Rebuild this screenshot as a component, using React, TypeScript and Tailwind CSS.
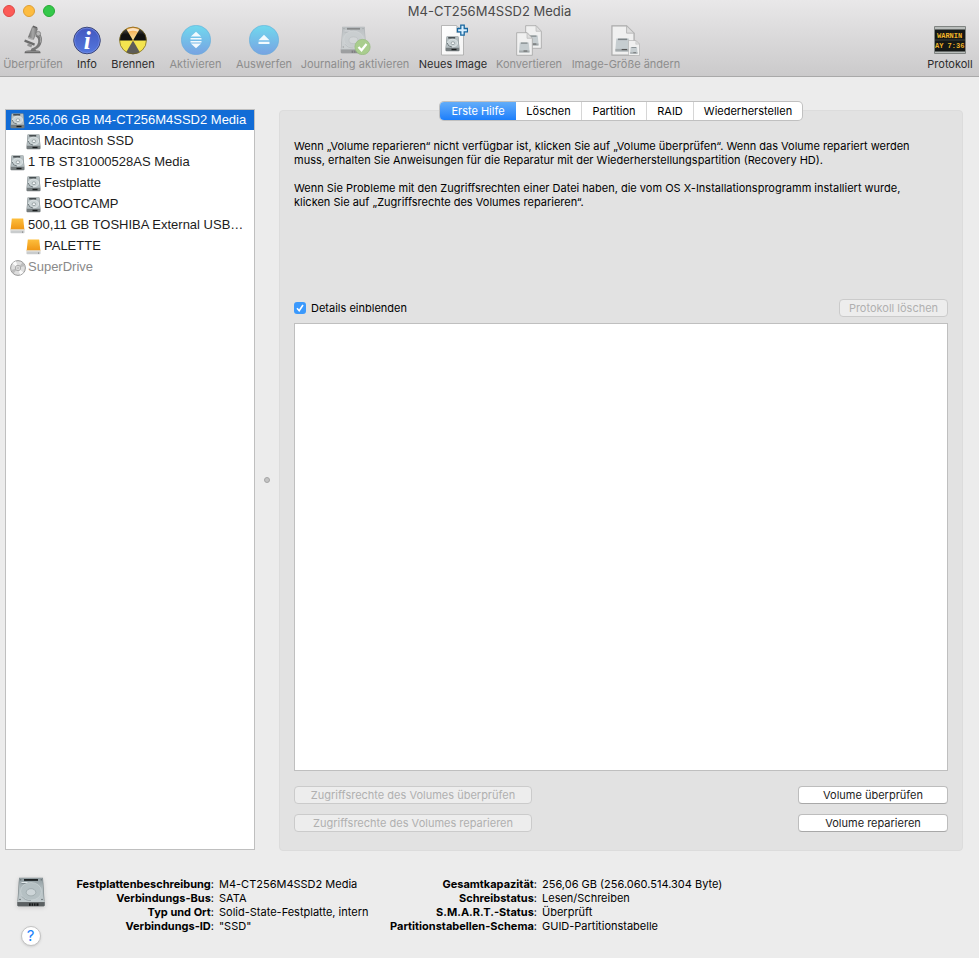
import { useState } from 'react';
import type { ReactNode } from 'react';
import clsx from 'clsx';

function SharedDefs() {
  return (
    <svg className="absolute w-0 h-0" aria-hidden="true">
      <defs>
        <linearGradient id="metal" x1="0" y1="0" x2="0" y2="1">
          <stop offset="0" stopColor="#8f9b9f" />
          <stop offset="0.5" stopColor="#b4bfc2" />
          <stop offset="1" stopColor="#c3cccf" />
        </linearGradient>
        <linearGradient id="orange" x1="0" y1="0" x2="0" y2="1">
          <stop offset="0" stopColor="#fdbf3d" />
          <stop offset="1" stopColor="#ef9413" />
        </linearGradient>
        <linearGradient id="sky" x1="0" y1="0" x2="0" y2="1">
          <stop offset="0" stopColor="#70d9ee" />
          <stop offset="1" stopColor="#78a2e2" />
        </linearGradient>
        <linearGradient id="info" x1="0" y1="0" x2="0" y2="1">
          <stop offset="0" stopColor="#4257bf" />
          <stop offset="1" stopColor="#5478de" />
        </linearGradient>
        <linearGradient id="steel" x1="0" y1="0" x2="1" y2="0">
          <stop offset="0" stopColor="#6d6d6d" />
          <stop offset="0.5" stopColor="#a8a8a8" />
          <stop offset="1" stopColor="#707070" />
        </linearGradient>
        <linearGradient id="burnTop" x1="0" y1="0" x2="0" y2="1">
          <stop offset="0" stopColor="#f3a13c" />
          <stop offset="1" stopColor="#fbe3a4" />
        </linearGradient>
        <linearGradient id="burnSide" x1="0" y1="0" x2="0" y2="1">
          <stop offset="0" stopColor="#4a4a4a" />
          <stop offset="0.5" stopColor="#111" />
        </linearGradient>
        <linearGradient id="page" x1="0" y1="0" x2="1" y2="1">
          <stop offset="0" stopColor="#ffffff" />
          <stop offset="1" stopColor="#f4f4f4" />
        </linearGradient>
      </defs>
    </svg>
  );
}

// drawn in a 30x30 box so it can be nested in the other icons
function DriveShape() {
  return (
    <>
      <path d="M3 .8h24l1.600 24.200v3.200a1 1 0 0 1-1 1H2.400a1 1 0 0 1-1-1V25z" fill="#7b8588" />
      <path d="M3.500 1h23l1.400 23.500H2.100z" fill="url(#metal)" />
      <path d="M1.400 25h27.200v3.200a1 1 0 0 1-1 1H2.400a1 1 0 0 1-1-1z" fill="#5b6062" />
      <path d="M1.500 24.600h27" stroke="#dfe5e7" strokeWidth=".6" />
      <path d="M13 26.300h9.500v2.500H13z" fill="#141617" />
      <path d="M15.200 26.300v2.500M17.600 26.300v2.500M20 26.300v2.500" stroke="#858a8c" strokeWidth=".6" />
      <path d="M8 2h14v1.900H8z" fill="#1f2426" />
      <path d="M5.500 5.500h6" stroke="#e8eef0" strokeWidth="1" />
      <path d="M5.500 6.400h6" stroke="#69757a" strokeWidth=".6" />
      <ellipse cx="15" cy="14.300" rx="10.500" ry="8.800" fill="#b5c0c3" stroke="#cfd7d9" strokeWidth=".6" />
      <ellipse cx="15" cy="15.300" rx="4.800" ry="3.600" fill="#cdd5d8" stroke="#8f9a9d" strokeWidth=".6" />
      <path d="M6 19.500q3 4.200 9 4" stroke="#8b979b" strokeWidth=".7" fill="none" />
      <circle cx="4.800" cy="2.800" r=".6" fill="#4b5153" />
      <circle cx="25.200" cy="2.800" r=".6" fill="#4b5153" />
      <circle cx="4" cy="22.500" r=".7" fill="#4b5153" />
      <circle cx="26" cy="22.500" r=".7" fill="#4b5153" />
    </>
  );
}

function Drive({ className }: { className: string }) {
  return (
    <svg viewBox="0 0 30 30" className={className} aria-hidden="true">
      <DriveShape />
    </svg>
  );
}

function SmallDrive() {
  return (
    <svg viewBox="0 0 15 16" className="w-[15px] h-4 shrink-0" aria-hidden="true">
      <path d="M1.600.5h11.800l1 11v3a.8.8 0 0 1-.8.8H1.400a.8.8 0 0 1-.8-.8v-3z" fill="#737a7c" />
      <path d="M1.800.8h11.400l.8 11H1z" fill="#b5bfc2" />
      <path d="M3.200 1.200h7v1.300h-7z" fill="#2f3436" />
      <ellipse cx="7.600" cy="7" rx="5" ry="3.800" fill="#cad3d5" stroke="#e6ebec" strokeWidth=".7" />
      <ellipse cx="7.900" cy="7.200" rx="1.800" ry="1.400" fill="#f7f9fa" stroke="#7e898c" strokeWidth=".7" />
      <path d="M2.200 7q.6 3.600 4.800 4" stroke="#667074" strokeWidth=".9" fill="none" />
      <path d="M.8 12.200h13.400v2.400H.8z" fill="#757c7e" />
      <path d="M6.500 12.800h5v1.400h-5z" fill="#191c1d" />
    </svg>
  );
}

function ExternalDrive() {
  return (
    <svg viewBox="0 0 15 16" className="w-[15px] h-4 shrink-0" aria-hidden="true">
      <path d="M1.800.5h11.400l1.200 11.500H.6z" fill="url(#orange)" />
      <path d="M.5 11.500h14v3a.8.8 0 0 1-.8.8H1.300a.8.8 0 0 1-.8-.8z" fill="#c9cccd" />
      <path d="M.5 11.500h14v.9H.5z" fill="#f1eee5" />
      <circle cx="12.500" cy="13.900" r=".5" fill="#5c5c5c" />
    </svg>
  );
}

function Disc() {
  return (
    <svg viewBox="0 0 16 16" className="w-4 h-4 shrink-0" aria-hidden="true">
      <circle cx="8" cy="8" r="7.400" fill="#dedede" stroke="#8d8d8d" strokeWidth=".9" />
      <path d="M8 8 2.500 3.500A7 7 0 0 1 6 1.300zM8 8l5.500 4.500a7 7 0 0 1-3.500 2.200z" fill="#fafafa" />
      <path d="M8 8 1.300 10a7 7 0 0 0 2.200 3.400zM8 8l6.700-2a7 7 0 0 0-2.200-3.400z" fill="#bdbdbd" />
      <circle cx="8" cy="8" r="2.700" fill="#eee" stroke="#999" strokeWidth=".8" />
      <circle cx="8" cy="8" r="1.100" fill="#fff" stroke="#8a8a8a" strokeWidth=".6" />
    </svg>
  );
}

function Microscope() {
  return (
    <svg viewBox="0 0 20 30" className="w-5 h-[30px]" aria-hidden="true">
      <path d="M14 7.500c4 1.200 5.800 5 4.600 9.700-.8 3.600-3 6-6.100 7.300l1 2H7.200l1.300-3c3.800-1 6-3 6.600-6.200.4-2.600 0-4.600-2.700-6z" fill="#777" />
      <path d="M15 9c2.600 1.800 3.300 5 2.300 8.600" stroke="#a8a8a8" strokeWidth="1" fill="none" />
      <path d="m9.500 1.800 5 1.900-3.900 10.600-5.300-2z" fill="url(#steel)" stroke="#6e6e6e" strokeWidth=".6" />
      <path d="m10.200.6 4.200 1.600-.5 1.300-4.200-1.600z" fill="#606060" />
      <path d="m5.800 11.900 4.300 1.600-.6 1.500-4.300-1.600z" fill="#aaa" />
      <circle cx="15.300" cy="8.700" r="2.300" fill="#b8b8b8" stroke="#777" strokeWidth=".7" />
      <path d="m2 14.600 10 4-.8 2.200-10-4z" fill="#6b6b6b" />
      <path d="m4.800 18.300 4.500 1.800-1.100 2.300-4-1.600z" fill="#929292" />
      <path d="M1.800 26.800q1-1.300 4-1.300h8q3 0 3.500 1.300l.3 1.400H1.500z" fill="#686868" />
      <path d="M3 26.600h13.500" stroke="#a4a4a4" strokeWidth=".6" />
    </svg>
  );
}

function InfoIcon() {
  return (
    <svg viewBox="0 0 30 30" className="w-[30px] h-[30px]" aria-hidden="true">
      <circle cx="15" cy="15.500" r="13.300" fill="url(#info)" stroke="#3a4475" strokeWidth="1" />
      <circle cx="15" cy="15.500" r="12.400" fill="none" stroke="#7f95e8" strokeWidth=".6" />
      <text x="15.200" y="24" textAnchor="middle" fontFamily="Liberation Serif, serif" fontWeight="700" fontStyle="italic" fontSize="25" fill="#fff">i</text>
    </svg>
  );
}

function BurnIcon() {
  return (
    <svg viewBox="0 0 30 30" className="w-[30px] h-[30px]" aria-hidden="true">
      <circle cx="15" cy="15.500" r="13.500" fill="#f4e44f" />
      <path d="M15 15.500 8.200 3.800a13.500 13.500 0 0 1 13.600 0z" fill="url(#burnTop)" />
      <path d="M15 15.500 8.200 3.800a13.500 13.500 0 0 0-6.700 11.700z" fill="url(#burnSide)" />
      <path d="M15 15.500 21.800 3.800a13.500 13.500 0 0 1 6.700 11.700z" fill="url(#burnSide)" />
      <path d="m15 15.500-6.800 11.700a13.500 13.500 0 0 0 13.600 0z" fill="#5d5c58" />
      <path d="M9 4.800q6-3.600 12 0l-1.200 2q-4.800-2-9.600 0z" fill="#fff" opacity=".65" />
      <circle cx="15" cy="15.500" r="13.400" fill="none" stroke="#6f5c1c" strokeWidth=".7" />
      <circle cx="15" cy="15.500" r="1" fill="#c5a93c" />
    </svg>
  );
}

function MountIcon() {
  return (
    <svg viewBox="0 0 30 30" className="w-[30px] h-[30px]" aria-hidden="true">
      <circle cx="15" cy="15" r="14.700" fill="url(#sky)" stroke="#69aed8" strokeWidth=".6" />
      <path d="m15 6.800 5.200 4.700H9.800zM15 23.200l5.200-4.700H9.800zM9.500 13h11v1.500h-11zM9.500 16h11v1.500h-11z" fill="#f2fafe" />
    </svg>
  );
}

function EjectIcon() {
  return (
    <svg viewBox="0 0 30 30" className="w-[30px] h-[30px]" aria-hidden="true">
      <circle cx="15" cy="15" r="14.700" fill="url(#sky)" stroke="#69aed8" strokeWidth=".6" />
      <path d="m15 9.800 5.500 5.500h-11zM9.500 16.800h11V19h-11z" fill="#f2fafe" />
    </svg>
  );
}

function JournalIcon() {
  return (
    <svg viewBox="0 0 32 30" className="w-8 h-[30px]" aria-hidden="true">
      <g opacity=".45">
        <svg x="0" y="1" width="29" height="28" viewBox="0 0 30 30"><DriveShape /></svg>
      </g>
      <circle cx="23.500" cy="22" r="7.700" fill="#a9cd8e" stroke="#94b77d" strokeWidth=".6" />
      <path d="m19.500 22 3 3.300 5-6.300" stroke="#fff" strokeWidth="2.200" fill="none" />
    </svg>
  );
}

function NewImageIcon() {
  return (
    <svg viewBox="0 0 30 32" className="w-[30px] h-8" aria-hidden="true">
      <path d="M3.500 1.500h15l7 7V31h-22z" fill="url(#page)" stroke="#a8a8a8" strokeWidth=".8" />
      <path d="M18.500 1.500v7h7z" fill="#e2e2e2" stroke="#bbb" strokeWidth=".6" />
      <svg x="7" y="12" width="15" height="16" viewBox="0 0 15 16"><SmallDrive /></svg>
      <path d="M22.800 1.200h3.400v3.300h3.300v3.400h-3.300v3.300h-3.400V7.900h-3.300V4.500h3.300z" fill="#d9efff" stroke="#18679f" strokeWidth="1.300" />
    </svg>
  );
}

function Page({ x, y, w, h }: { x: number; y: number; w: number; h: number }) {
  return (
    <svg x={x} y={y} width={w} height={h} viewBox="0 0 18 24" preserveAspectRatio="none">
      <path d="M.7.700h11l5.600 5.600v17H.7z" fill="#f0f0f0" stroke="#aaa" strokeWidth=".9" />
      <path d="M11.700.700v5.600h5.600z" fill="#ddd" stroke="#b5b5b5" strokeWidth=".7" />
      <path d="M4 10.500h9.500l.8 8v2h-11v-2z" fill="#c6cdd0" />
      <path d="M5.200 10.500h7v1.200h-7z" fill="#7d8487" />
      <path d="M3.300 18.500h11v2h-11z" fill="#a4aaac" />
      <path d="M8 19h4" stroke="#555" strokeWidth=".9" />
    </svg>
  );
}

function ConvertIcon() {
  return (
    <svg viewBox="0 0 28 32" className="w-7 h-8" aria-hidden="true">
      <Page x={10} y={1} w={17} h={24} />
      <Page x={1} y={8} w={17} h={24} />
    </svg>
  );
}

function ResizeIcon() {
  return (
    <svg viewBox="0 0 30 32" className="w-[30px] h-8" aria-hidden="true">
      <Page x={0} y={1} w={24} h={31} />
      <Page x={17} y={16} w={12} h={16} />
    </svg>
  );
}

function LogIcon() {
  return (
    <svg viewBox="0 0 32 28" className="w-8 h-7" aria-hidden="true">
      <path d="M.5.5h31v27H.5z" fill="#b9bdbb" stroke="#808482" />
      <path d="M1 3.500h30v22H1z" fill="#151816" />
      <path d="M1 14h30" stroke="#3d403c" />
      <g fontFamily="Liberation Mono, monospace" fontWeight="700" fontSize="7" fill="#f0b429">
        <text x="3" y="12">WARNIN</text>
        <text x="1" y="22">AY 7:36</text>
      </g>
    </svg>
  );
}

type Tool = { label: string; icon: ReactNode; width: string; disabled?: boolean };

const tools: Tool[] = [
  { label: 'Überprüfen', icon: <Microscope />, width: 'w-[66px]', disabled: true },
  { label: 'Info', icon: <InfoIcon />, width: 'w-[42px]' },
  { label: 'Brennen', icon: <BurnIcon />, width: 'w-[50px]' },
  { label: 'Aktivieren', icon: <MountIcon />, width: 'w-[75px]', disabled: true },
  { label: 'Auswerfen', icon: <EjectIcon />, width: 'w-[62px]', disabled: true },
  { label: 'Journaling aktivieren', icon: <JournalIcon />, width: 'w-[120px]', disabled: true },
  { label: 'Neues Image', icon: <NewImageIcon />, width: 'w-[76px]' },
  { label: 'Konvertieren', icon: <ConvertIcon />, width: 'w-[76px]', disabled: true },
  { label: 'Image-Größe ändern', icon: <ResizeIcon />, width: 'w-[118px]', disabled: true },
];

function ToolButton({ tool }: { tool: Tool }) {
  return (
    <button disabled={tool.disabled} className={clsx('flex flex-col items-center shrink-0', tool.width, tool.disabled ? 'text-[#8d8d8d]' : 'text-[#2c2c2c]')}>
      <span className="h-8 flex items-center justify-center">{tool.icon}</span>
      <span className="text-[11px] leading-4 whitespace-nowrap">{tool.label}</span>
    </button>
  );
}

const volumes = [
  { name: '256,06 GB M4-CT256M4SSD2 Media', kind: 'drive', child: false },
  { name: 'Macintosh SSD', kind: 'drive', child: true },
  { name: '1 TB ST31000528AS Media', kind: 'drive', child: false },
  { name: 'Festplatte', kind: 'drive', child: true },
  { name: 'BOOTCAMP', kind: 'drive', child: true },
  { name: '500,11 GB TOSHIBA External USB…', kind: 'external', child: false },
  { name: 'PALETTE', kind: 'external', child: true },
  { name: 'SuperDrive', kind: 'disc', child: false },
];

function Sidebar() {
  const [selected, setSelected] = useState(0);
  return (
    <ul className="w-[250px] shrink-0 bg-white border border-[#bfbfbf] font-['Liberation_Sans',Arial,sans-serif]">
      {volumes.map((v, i) => (
        <li key={v.name} className="h-[21px]">
          <button
            onClick={() => setSelected(i)}
            className={clsx(
              'w-full h-5 flex items-center text-[13px] leading-5 text-left whitespace-nowrap',
              v.child ? 'pl-5' : 'pl-1',
              i === selected ? 'bg-[#116cd6] text-white' : v.kind === 'disc' ? 'text-[#8a8a8a]' : 'text-[#1c1c1c]',
            )}
          >
            <span className="w-[18px] pt-px shrink-0">
              {v.kind === 'drive' && <SmallDrive />}
              {v.kind === 'external' && <ExternalDrive />}
              {v.kind === 'disc' && <Disc />}
            </span>
            <span>{v.name}</span>
          </button>
        </li>
      ))}
    </ul>
  );
}

const tabs = [
  { label: 'Erste Hilfe', width: 'w-[76px]' },
  { label: 'Löschen', width: 'w-[65px]' },
  { label: 'Partition', width: 'w-[65px]' },
  { label: 'RAID', width: 'w-[47px]' },
  { label: 'Wiederherstellen', width: 'w-[109px]' },
];

function PushButton({ children, disabled, className }: { children: ReactNode; disabled?: boolean; className: string }) {
  return (
    <button
      disabled={disabled}
      className={clsx(
        'h-[18px] rounded border text-[11px] leading-4 whitespace-nowrap',
        disabled ? 'bg-[#ededed] border-[#cbcbcb] text-[#b0b0b0]' : 'bg-white border-[#bdbdbd] border-b-[#a8a8a8] text-[#1c1c1c]',
        className,
      )}
    >
      {children}
    </button>
  );
}

function FirstAid() {
  const [tab, setTab] = useState(0);
  const [details, setDetails] = useState(true);
  return (
    <section className="flex-1 min-w-0 flex flex-col mt-px -mb-px bg-[#e2e2e2] border border-[#dcdcdc] rounded px-3.5 pb-[18px]">
      <div role="tablist" className="-mt-[9px] self-center flex h-[18px] rounded bg-white ring-1 ring-[#c0c0c0] overflow-hidden">
        {tabs.map((t, i) => (
          <button
            key={t.label}
            role="tab"
            aria-selected={i === tab}
            onClick={() => setTab(i)}
            className={clsx(
              'text-[11px] leading-[18px] border-[#d6d6d6]',
              t.width,
              i === tab ? 'bg-linear-to-b from-[#62adf9] to-[#1a7efb] text-white' : 'text-black',
              i > 1 && 'border-l',
            )}
          >
            {t.label}
          </button>
        ))}
      </div>

      <div className="mt-[19px] h-40 text-[11px] leading-[14px] text-black">
        <p>
          Wenn „Volume reparieren“ nicht verfügbar ist, klicken Sie auf „Volume überprüfen“. Wenn das Volume repariert werden
          <br />
          muss, erhalten Sie Anweisungen für die Reparatur mit der Wiederherstellungspartition (Recovery HD).
        </p>
        <p className="mt-3.5">
          Wenn Sie Probleme mit den Zugriffsrechten einer Datei haben, die vom OS X-Installationsprogramm installiert wurde,
          <br />
          klicken Sie auf „Zugriffsrechte des Volumes reparieren“.
        </p>
      </div>

      <div className="flex items-center justify-between">
        <label className="flex items-center gap-[5px] text-[11px] leading-[14px] text-black">
          <span className="grid w-3 h-3">
            <input
              type="checkbox"
              checked={details}
              onChange={(e) => setDetails(e.target.checked)}
              className="appearance-none w-3 h-3 rounded-[3px] bg-white checked:bg-[#3b99fc] col-start-1 row-start-1"
            />
            {details && (
              <svg viewBox="0 0 12 12" className="w-3 h-3 col-start-1 row-start-1 pointer-events-none" aria-hidden="true">
                <path d="m3 6.300 2.200 2.400L9 3" stroke="#fff" strokeWidth="1.600" fill="none" />
              </svg>
            )}
          </span>
          Details einblenden
        </label>
        <PushButton disabled className="w-[109px]">Protokoll löschen</PushButton>
      </div>

      <textarea readOnly aria-label="Protokoll" className="mt-1.5 flex-1 w-full min-h-40 resize-none bg-white border border-[#bfbfbf] outline-none p-1 text-[11px]" />

      <div className="mt-[15px] flex justify-between">
        <div className="flex flex-col gap-2.5">
          <PushButton disabled className="w-[238px]">Zugriffsrechte des Volumes überprüfen</PushButton>
          <PushButton disabled className="w-[238px]">Zugriffsrechte des Volumes reparieren</PushButton>
        </div>
        <div className="flex flex-col gap-2.5">
          <PushButton className="w-[150px]">Volume überprüfen</PushButton>
          <PushButton className="w-[150px]">Volume reparieren</PushButton>
        </div>
      </div>
    </section>
  );
}

function Facts({ rows, columns }: { rows: string[][]; columns: string }) {
  return (
    <dl className={clsx('grid gap-x-[5px] content-start text-[11px] leading-[14px] text-black whitespace-nowrap', columns)}>
      {rows.map(([k, v]) => (
        <div key={k} className="contents">
          <dt className="text-right"><b>{k}</b>:</dt>
          <dd>{v}</dd>
        </div>
      ))}
    </dl>
  );
}

export default function App() {
  return (
    <div className="min-h-screen flex flex-col bg-[#ececec] font-[Inter,'Liberation_Sans',sans-serif]">
      <SharedDefs />
      <header className="bg-linear-to-b from-[#e9e8e9] to-[#cbcacb] border-b border-[#a9a9a9] h-[77px]">
        <div className="h-6 pb-0.5 grid grid-cols-[1fr_auto_1fr] items-center">
          <div className="flex gap-2 pl-[3px]">
            <button aria-label="Schließen" className="w-3 h-3 rounded-full bg-[#fc5b57] border border-[#df4744]" />
            <button aria-label="Minimieren" className="w-3 h-3 rounded-full bg-[#fdbc40] border border-[#de9f34]" />
            <button aria-label="Vergrößern" className="w-3 h-3 rounded-full bg-[#34c84a] border border-[#27aa35]" />
          </div>
          <h1 className="text-[13px] leading-4 text-[#4a4a4a]">M4-CT256M4SSD2 Media</h1>
        </div>
        <div className="flex justify-between">
          <div className="flex">
            {tools.map((t) => <ToolButton key={t.label} tool={t} />)}
          </div>
          <ToolButton tool={{ label: 'Protokoll', icon: <LogIcon />, width: 'w-[58px]' }} />
        </div>
      </header>

      <main className="flex-1 flex pt-8 pl-[5px] pr-4">
        <Sidebar />
        <div className="w-6 shrink-0 flex items-center justify-center">
          <span className="w-1.5 h-1.5 rounded-full bg-[#c4c4c4] border border-[#a5a5a5]" />
        </div>
        <FirstAid />
      </main>

      <footer className="flex h-[108px] pt-[26px]">
        <div className="w-[61px] shrink-0 flex flex-col items-center">
          <Drive className="w-[30px] h-8 drop-shadow-sm" />
          <button aria-label="Hilfe" className="mt-[18px] w-5 h-5 rounded-full bg-white border border-[#c3c3c3] shadow-sm text-[15px] leading-4 text-[#1a82fb]">?</button>
        </div>
        <Facts
          columns="grid-cols-[153px_164px] mt-px"
          rows={[
            ['Festplattenbeschreibung', 'M4-CT256M4SSD2 Media'],
            ['Verbindungs-Bus', 'SATA'],
            ['Typ und Ort', 'Solid-State-Festplatte, intern'],
            ['Verbindungs-ID', '"SSD"'],
          ]}
        />
        <Facts
          columns="grid-cols-[154px_auto] mt-px"
          rows={[
            ['Gesamtkapazität', '256,06 GB (256.060.514.304 Byte)'],
            ['Schreibstatus', 'Lesen/Schreiben'],
            ['S.M.A.R.T.-Status', 'Überprüft'],
            ['Partitionstabellen-Schema', 'GUID-Partitionstabelle'],
          ]}
        />
      </footer>
    </div>
  );
}
